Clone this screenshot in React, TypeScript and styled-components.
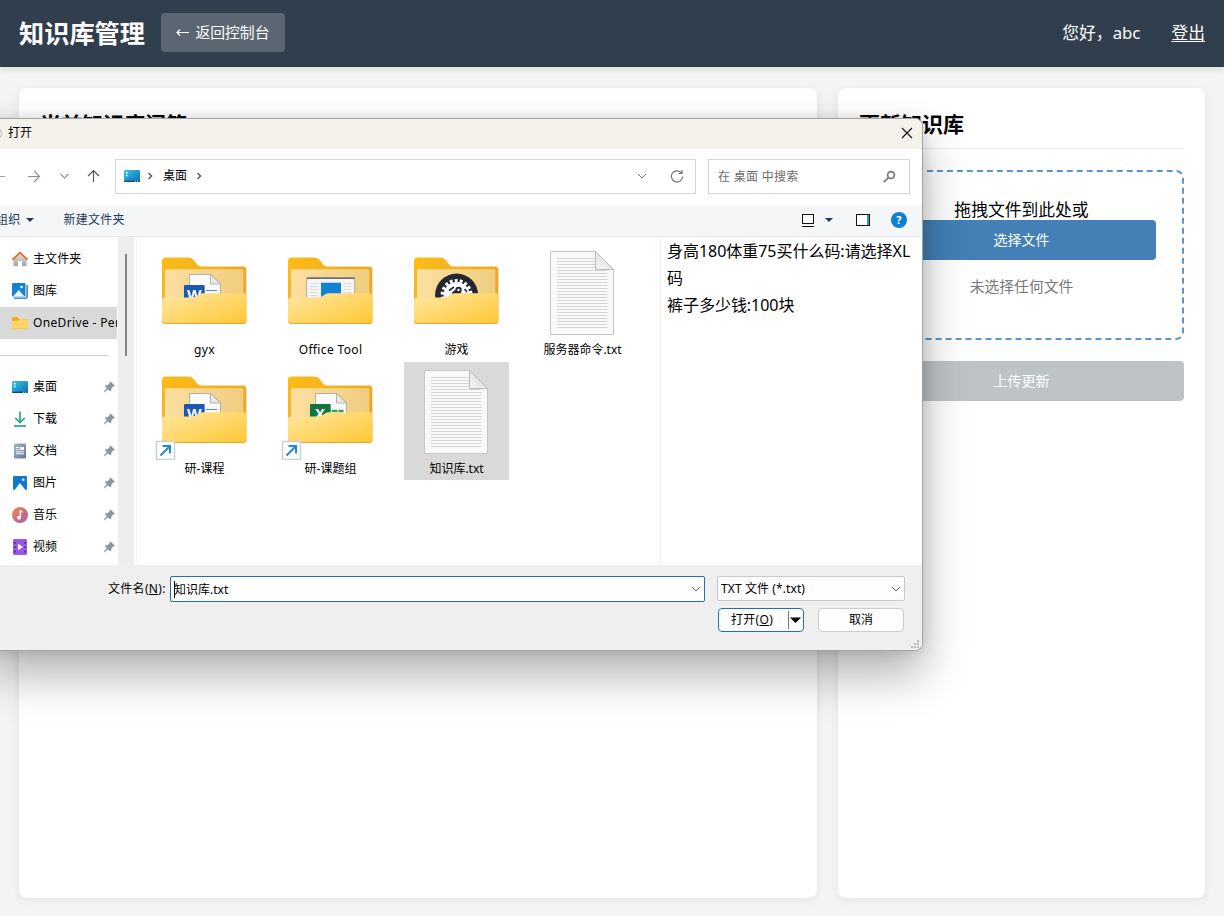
import React from "react";
import styled, { createGlobalStyle, css } from "styled-components";

const fontStack = `"Noto Sans", "Noto Sans CJK SC", sans-serif`;

const GlobalStyle = createGlobalStyle`
  * { box-sizing: border-box; }
  html, body { margin: 0; height: 100%; overflow: hidden; }
  body { background: #f4f4f4; font-family: ${fontStack}; color: #000; }
  h1, h2, p { margin: 0; }
  svg { display: block; flex: none; }
  button { font-family: inherit; }
`;

/* ---------- page ---------- */

const Page = styled.div`
  height: 916px;
  display: flex;
  flex-direction: column;
`;

const Header = styled.header`
  height: 67px;
  flex: none;
  padding: 0 19px 2px;
  display: flex;
  align-items: center;
  background: #313e4d;
  color: #fff;
  box-shadow: 0 2px 8px rgba(0, 0, 0, 0.12);
`;

const Title = styled.h1`
  font-size: 25.2px;
  line-height: 34px;
  white-space: nowrap;
`;

const BackButton = styled.button`
  margin: 0 0 0 16px;
  width: 124px;
  height: 39px;
  padding: 0 0 2px;
  border: 0;
  border-radius: 4px;
  background: #5a6671;
  color: #fff;
  font-size: 14.8px;
  display: flex;
  align-items: center;
  justify-content: center;
  gap: 6px;
  white-space: nowrap;
  svg { margin-top: 2px; }
`;

const UserArea = styled.div`
  margin-left: auto;
  display: flex;
  gap: 31px;
  font-size: 16.8px;
  line-height: 24px;
`;

const Logout = styled.a`
  text-decoration: underline;
  text-decoration-thickness: 1px;
  text-underline-offset: 2px;
`;

const Main = styled.main`
  flex: 1;
  display: grid;
  grid-template-columns: 798px 367px;
  gap: 21px;
  padding: 21px 19px 18px;
`;

const Card = styled.section`
  background: #fff;
  border-radius: 8px;
  padding: 21px;
  box-shadow: 0 2px 10px rgba(0, 0, 0, 0.07);
`;

const CardTitle = styled.h2`
  height: 40px;
  font-size: 21px;
  line-height: 30px;
  border-bottom: 1px solid #eee;
  margin-bottom: 21px;
`;

const DropZone = styled.div`
  height: 170px;
  border: 2px dashed #5b95cb;
  border-radius: 8px;
  padding: 26px;
  display: flex;
  flex-direction: column;
  text-align: center;
`;

const DropHint = styled.p`
  height: 22px;
  font-size: 16.8px;
  line-height: 24px;
`;

const WideButton = styled.button<{ $disabled?: boolean }>`
  width: 100%;
  height: 40px;
  flex: none;
  border: 0;
  padding: 0 0 2px;
  border-radius: 4px;
  font-size: 14px;
  color: #fff;
  background: ${(p) => (p.$disabled ? "#bdc3c7" : "#447fb6")};
  margin-top: ${(p) => (p.$disabled ? "21px" : "0")};
`;

const NoFile = styled.p`
  margin-top: 15px;
  font-size: 14.8px;
  line-height: 22px;
  color: #777;
`;

/* ---------- dialog ---------- */

const Dialog = styled.div`
  position: absolute;
  left: -11px;
  top: 118px;
  width: 934px;
  height: 533px;
  border: 1px solid #a3a3a3;
  border-left: 0;
  border-radius: 0 8px 8px 0;
  overflow: hidden;
  background: #fff;
  font-size: 12px;
  line-height: 18px;
  letter-spacing: 0.1px;
  display: flex;
  flex-direction: column;
  box-shadow: 0 24px 46px rgba(0, 0, 0, 0.31), 0 0 14px rgba(0, 0, 0, 0.12);
`;

const TitleBar = styled.div`
  height: 30px;
  flex: none;
  padding: 0 9px 2px 0;
  display: flex;
  align-items: center;
  background: #f5f2eb;
  svg:last-child { margin-left: auto; }
`;

const WindowName = styled.span`
  margin: -1px 0 0 6px;
`;

const NavBar = styled.div`
  height: 56px;
  flex: none;
  padding: 10px 12px 0 0;
  display: flex;
`;

const NavIcons = styled.div`
  width: 126px;
  height: 35px;
`;

const Field = styled.div<{ $w: number }>`
  width: ${(p) => p.$w}px;
  height: 35px;
  border: 1px solid #d6d6d6;
  display: flex;
  align-items: center;
`;

const AddressBox = styled(Field)`
  padding: 0 7px 1px 8px;
  margin-right: 12px;
`;

const Crumb = styled.span`
  margin: -1px 9px 0 10px;
`;

const RightIcons = styled.div`
  margin-left: auto;
  display: flex;
  align-items: center;
  gap: 17px;
`;

const SearchBox = styled(Field)`
  padding: 0 13px 0 9px;
  color: #6b6b6b;
  letter-spacing: 0.3px;
`;

const ToolBar = styled.div`
  height: 32px;
  flex: none;
  border-bottom: 1px solid #e6e8ea;
  background: #f4f6f8;
  color: #1e395b;
  padding: 0 15px 1px 7px;
  display: flex;
  align-items: center;
  white-space: nowrap;
`;

const Command = styled.span<{ $left?: number }>`
  margin-left: ${(p) => p.$left ?? 0}px;
  letter-spacing: 0.25px;
`;

const ToolIcons = styled.div`
  margin-left: auto;
  display: flex;
  align-items: center;
`;

const Body = styled.div`
  flex: 1;
  display: flex;
  min-height: 0;
`;

const SideBar = styled.div`
  width: 128px;
  margin-right: 1px;
  padding-top: 6px;
  overflow: hidden;
`;

const SideItem = styled.div<{ $active?: boolean }>`
  height: 32px;
  padding: 0 2px 0 23px;
  display: flex;
  align-items: center;
  white-space: nowrap;
  ${(p) =>
    p.$active &&
    css`
      background: #d9d9d9;
      letter-spacing: 0.35px;
    `}
`;

const SideLabel = styled.span`
  margin-left: 5px;
  flex: 1;
`;

const SideRule = styled.div`
  height: 32px;
  width: 120px;
  padding-top: 16px;
  &::after {
    content: "";
    display: block;
    height: 1px;
    background: #cfcfcf;
  }
`;

const ScrollTrack = styled.div`
  width: 16px;
  background: #eeeeee;
  padding: 17px 0 0 7px;
`;

const ScrollThumb = styled.div`
  width: 2px;
  height: 102px;
  background: #868686;
`;

const FilePane = styled.div`
  width: 524px;
  margin-left: 2px;
  border-left: 1px solid #f3f3f3;
  padding: 6px 0 0 15px;
  display: grid;
  grid-template-columns: repeat(4, 105px);
  grid-auto-rows: 118px;
  column-gap: 21px;
  row-gap: 1px;
`;

const Tile = styled.div<{ $selected?: boolean }>`
  background: ${(p) => (p.$selected ? "#d9d9d9" : "transparent")};
  border-radius: 1px;
  text-align: center;
  white-space: nowrap;
`;

const TileLabel = styled.div<{ $latin?: boolean }>`
  letter-spacing: ${(p) => (p.$latin ? "0.35px" : "0")};
`;

const Preview = styled.div`
  flex: 1;
  border-left: 1px solid #f0f0f0;
  padding: 1px 8px 0 6px;
  font-size: 16px;
  line-height: 27px;
  letter-spacing: -0.03px;
  white-space: nowrap;
`;

const Footer = styled.div`
  height: 85px;
  flex: none;
  background: #efefef;
  padding: 11px 17px 0 119px;
  display: flex;
`;

const NameLabel = styled.label`
  width: 62px;
  padding-top: 4px;
  letter-spacing: 0.3px;
  white-space: nowrap;
`;

const NameInput = styled.div`
  width: 535px;
  height: 26px;
  border: 1px solid #1f72b0;
  border-radius: 2px;
  background: #fff;
  padding: 0 3px;
  display: flex;
  align-items: center;
  justify-content: space-between;
`;

const FileName = styled.span`
  display: flex;
  margin-top: 2px;
  letter-spacing: 0;
`;

const Caret = styled.span`
  width: 1px;
  height: 17px;
  margin-right: -1px;
  background: #000;
`;

const FooterRight = styled.div`
  margin-left: 12px;
  width: 188px;
`;

const TypeSelect = styled.div`
  height: 25px;
  border: 1px solid #c9c9c9;
  border-radius: 2px;
  background: #fdfdfd;
  padding: 0 3px;
  display: flex;
  align-items: center;
  justify-content: space-between;
`;

const Buttons = styled.div`
  margin: 7px 1px 0 1px;
  display: flex;
  justify-content: space-between;
`;

const DialogButton = styled.div<{ $primary?: boolean }>`
  width: 86px;
  height: 24px;
  border: 1px solid ${(p) => (p.$primary ? "#1f72b0" : "#cccccc")};
  border-radius: 4px;
  background: #fdfdfd;
  display: flex;
  align-items: center;
  justify-content: ${(p) => (p.$primary ? "flex-start" : "center")};
  padding-left: ${(p) => (p.$primary ? "12px" : "0")};
  letter-spacing: ${(p) => (p.$primary ? "0.3px" : "0")};
`;

const ButtonText = styled.span<{ $w?: number }>`
  margin-top: -1px;
  width: ${(p) => (p.$w ? `${p.$w}px` : "auto")};
`;

const FieldText = styled.span`
  margin-top: 1px;
`;

const Grip = styled.div`
  position: absolute;
  right: 3px;
  bottom: 2px;
`;

const Gap = styled.span<{ $w: number }>`
  width: ${(p) => p.$w}px;
  flex: none;
`;

/* ---------- icons ---------- */

const DesktopIcon = () => (
  <svg width="16" height="16" viewBox="0 0 16 16">
    <defs>
      <linearGradient id="desk" x1="0" y1="0" x2="1" y2="1">
        <stop offset="0" stopColor="#35cbe0" />
        <stop offset="1" stopColor="#1168b8" />
      </linearGradient>
    </defs>
    <rect y="2" width="16" height="12" rx="1.2" fill="url(#desk)" />
    <path d="M0 12.800h16a1.200 1.200 0 0 1-1.200 1.200H1.200A1.200 1.200 0 0 1 0 12.800z" fill="#0c4a80" />
    <path d="M2 4.700h1.600M2 7.500h1.600" stroke="#fff" strokeWidth="1.500" />
    <path d="M11 13.300h1M13 13.300h1" stroke="#cfe9fa" strokeWidth="1" />
  </svg>
);

const HomeIcon = () => (
  <svg width="16" height="16" viewBox="0 0 16 16">
    <defs>
      <linearGradient id="wall" x1="0" y1="0" x2="0" y2="1">
        <stop offset="0" stopColor="#e6e6e6" />
        <stop offset="1" stopColor="#a3a3a3" />
      </linearGradient>
    </defs>
    <path d="M1.500 7.500 8 2l6.500 5.500V14a1.300 1.300 0 0 1-1.300 1.300H10V10H6v5.300H2.800A1.300 1.300 0 0 1 1.500 14z" fill="url(#wall)" />
    <path d="M1 8.300 8 1.600l7 6.700" fill="none" stroke="#d9742f" strokeWidth="1.900" strokeLinecap="round" strokeLinejoin="round" />
  </svg>
);

const GalleryIcon = () => (
  <svg width="16" height="16" viewBox="0 0 16 16">
    <path d="M15.100 2v11.800a1.300 1.300 0 0 1-1.300 1.300H2" fill="none" stroke="#2376b8" strokeWidth="1.400" />
    <rect width="13.500" height="13.500" rx="1" fill="#1583d5" />
    <path d="M1 13.500 6.800 7l5.800 6.500z" fill="#eaf6ff" />
    <circle cx="9.500" cy="4" r="1.300" fill="#fff" />
  </svg>
);

const OneDriveFolder = () => (
  <svg width="16" height="16" viewBox="0 0 16 16">
    <path d="M0 3a1 1 0 0 1 1-1h4.500l2 2H15a1 1 0 0 1 1 1v8a1 1 0 0 1-1 1H1a1 1 0 0 1-1-1z" fill="#f0ae13" />
    <path d="M0 6h5.500L7.500 4.300H15a1 1 0 0 1 1 1V13a1 1 0 0 1-1 1H1a1 1 0 0 1-1-1z" fill="#ffd666" />
    <path d="M.5 13.700h15" stroke="#e8b63e" strokeWidth=".6" />
  </svg>
);

const DownloadIcon = () => (
  <svg width="16" height="16" viewBox="0 0 16 16" fill="none" stroke="#2ba58c" strokeWidth="1.700">
    <path d="M8 .5v11M3.300 7 8 11.600 12.700 7" />
    <path d="M2 15h12" />
  </svg>
);

const DocIcon = () => (
  <svg width="16" height="16" viewBox="0 0 16 16">
    <defs>
      <linearGradient id="doc" x1="0" y1="0" x2="1" y2="1">
        <stop offset="0" stopColor="#a3b5cc" />
        <stop offset="1" stopColor="#60799a" />
      </linearGradient>
    </defs>
    <rect x="2" y=".5" width="12" height="15" rx="1.200" fill="url(#doc)" />
    <path d="M4 4.500h3M4 6.500h3M4 8.800h8M4 10.800h8" stroke="#fff" />
    <rect x="8" y="4" width="4" height="3" fill="#fff" />
  </svg>
);

const PictureIcon = () => (
  <svg width="16" height="16" viewBox="0 0 16 16">
    <rect x="1" y="1" width="14" height="14" rx="1" fill="#1279ca" />
    <path d="M2.500 15 8 8l5.500 7z" fill="#eff8ff" />
    <circle cx="11.300" cy="4.700" r="1.200" fill="#fff" />
  </svg>
);

const MusicIcon = () => (
  <svg width="16" height="16" viewBox="0 0 16 16">
    <defs>
      <linearGradient id="mus" x1="0" y1="0" x2="1" y2="1">
        <stop offset="0" stopColor="#ee8852" />
        <stop offset="1" stopColor="#ac5ba6" />
      </linearGradient>
    </defs>
    <circle cx="8" cy="8" r="8" fill="url(#mus)" />
    <path d="M8.200 10.500V3.800l2.600 1.500" fill="none" stroke="#fff" strokeWidth="1.300" />
    <circle cx="7" cy="10.700" r="1.900" fill="#fff" />
  </svg>
);

const VideoIcon = () => (
  <svg width="16" height="16" viewBox="0 0 16 16">
    <rect x="1" y="0" width="14" height="16" rx="1.200" fill="#9b5ae2" />
    <path d="M3 3v11M13 3v11" stroke="#43207e" strokeWidth="1.600" strokeDasharray="1.600 2.800" />
    <path d="M6 4.800v6.400l5-3.200z" fill="#fff" />
  </svg>
);

const PinIcon = () => (
  <svg width="11" height="12" viewBox="0 0 11 12" fill="#8a959e">
    <path d="M6.500.800 10.400 4.700 9.400 5.600 8.800 5.500 7.200 7.300 7 9.300 6.200 10 3.900 7.900 .6 11 .2 10.600 3.100 7 1.200 5.200 2 4.400 4 4.200 5.800 2.500 5.700 1.700z" stroke="#8a959e" strokeWidth=".6" />
  </svg>
);

const CrumbArrow = () => (
  <svg width="6" height="8" viewBox="0 0 6 8" fill="none" stroke="#5a5a5a" strokeWidth="1.500">
    <path d="M1.500 1 4.500 4 1.500 7" />
  </svg>
);

const Chevron = ({ color = "#777" }: { color?: string }) => (
  <svg width="10" height="8" viewBox="0 0 10 8" fill="none" stroke={color} strokeWidth="1">
    <path d="M1 2 5 6 9 2" />
  </svg>
);

const Triangle = () => (
  <svg width="8" height="4" viewBox="0 0 8 4">
    <path d="M0 0h8L4 4z" fill="#1e395b" />
  </svg>
);

type Content = "word" | "excel" | "window" | "gear";

const OfficeDoc = ({ kind }: { kind: "word" | "excel" }) => (
  <g>
    <path d="M37.500 31.500H58.500L68.500 41V60h-31z" fill="#fafafa" stroke="#a2a2a2" strokeWidth=".8" />
    <path d="M58.500 31.500V41h10z" fill="#e9e9e9" stroke="#a2a2a2" strokeWidth=".8" />
    {kind === "word" ? (
      <path d="M54 47.500h11" stroke="#4a90d0" strokeWidth="1" />
    ) : (
      <path d="M54 49h5.500M60.500 49h5" stroke="#27a267" strokeWidth="2.500" />
    )}
    <rect x="32" y="42" width="20.700" height="18" rx="1" fill={kind === "word" ? "#1b57b4" : "#12753f"} />
    <text x="42.200" y="57" fontSize="15" fontWeight="700" fill="#fff" textAnchor="middle">
      {kind === "word" ? "W" : "X"}
    </text>
  </g>
);

const Shape = { width: 105, height: 98, viewBox: "0 0 105 98" };

const FolderIcon = ({ content, shortcut }: { content: Content; shortcut?: boolean }) => (
  <svg {...Shape}>
    <defs>
      <linearGradient id="fback" x1="0" y1="0" x2="1" y2=".6">
        <stop offset="0" stopColor="#fdbc17" />
        <stop offset="1" stopColor="#e6a82c" />
      </linearGradient>
      <linearGradient id="finner" x1="0" y1="0" x2="1" y2="0">
        <stop offset="0" stopColor="#fce0a0" />
        <stop offset="1" stopColor="#efcd80" />
      </linearGradient>
      <linearGradient id="ffront" x1="0" y1="0" x2="1" y2="1">
        <stop offset="0" stopColor="#ffe7a2" />
        <stop offset="1" stopColor="#ffc833" />
      </linearGradient>
    </defs>
    <path d="M10 18a3.500 3.500 0 0 1 3.500-3.500H36c3 0 4.300 1 6 3l3.500 4.300c1 1.300 2 1.700 3.500 1.700h42.200a3.200 3.200 0 0 1 3.200 3.200V77.500a3.500 3.500 0 0 1-3.500 3.500H13.500A3.500 3.500 0 0 1 10 77.500z" fill="url(#fback)" />
    <rect x="13" y="26.300" width="78.300" height="45" rx="1.500" fill="url(#finner)" />
    {(content === "word" || content === "excel") && <OfficeDoc kind={content} />}
    {content === "window" && (
      <g>
        <rect x="28.700" y="34.500" width="48" height="30" rx="1.500" fill="#f5f5f5" stroke="#a69c8b" strokeWidth=".8" />
        <path d="M28.700 35.200h48" stroke="#6f6a64" strokeWidth="1.600" />
        <rect x="43" y="39.700" width="20" height="16" fill="#1283d2" />
        <path d="M32 40.500h8M32 43.500h8M32 46.500h8M32 49.500h8M32 52.500h8M65.500 40.500h8M65.500 43.500h8M65.500 46.500h8M65.500 49.500h8" stroke="#dcdcdc" strokeWidth="1" />
      </g>
    )}
    {content === "gear" && (
      <g>
        <circle cx="52.600" cy="52" r="21.500" fill="#252632" />
        <circle cx="52.600" cy="52" r="9" fill="none" stroke="#fff" strokeWidth="8" />
        <circle cx="52.600" cy="52" r="14" fill="none" stroke="#fff" strokeWidth="4" strokeDasharray="2.800 2.100" />
        <path d="M45 47.500l5-3.500M60.500 46l2.500 3" stroke="#252632" strokeWidth="1.600" />
        <circle cx="54.500" cy="47" r="3.200" fill="#252632" />
        <circle cx="54.500" cy="47" r="1.200" fill="#fff" />
      </g>
    )}
    <path d="M10 57.500a3 3 0 0 1 3-3H39c3 0 4.500-.7 6.500-2l1.500-1c1.300-.9 2.500-1.200 4.500-1.200H91.700a2.700 2.700 0 0 1 2.700 2.700V77.500a3.500 3.500 0 0 1-3.500 3.500H13.500A3.500 3.500 0 0 1 10 77.500z" fill="url(#ffront)" />
    <path d="M10.500 78.500c.6 1.300 1.700 1.900 3 1.900h77.400c1.400 0 2.500-.6 3-1.900" fill="none" stroke="#dfa52d" strokeWidth="1" />
    {shortcut && (
      <g>
        <rect x="4.500" y="79.500" width="18" height="18" rx=".5" fill="#fff" stroke="#c6d0de" strokeWidth="1.500" />
        <path d="M8.500 93.500 17.500 84.500M10.500 84h7.500v7.500" fill="none" stroke="#2389d2" strokeWidth="2" />
      </g>
    )}
  </svg>
);

const ruleRows = Array.from({ length: 24 }, (_, i) => 15.5 + i * 3);

const TextFileIcon = () => (
  <svg {...Shape}>
    <defs>
      <linearGradient id="fold" x1="0" y1="1" x2="1" y2="0">
        <stop offset="0" stopColor="#f6f6f6" />
        <stop offset="1" stopColor="#d5d5d5" />
      </linearGradient>
    </defs>
    <path d="M20.500 8.500H65.500L83.500 26.500V91.500h-63z" fill="#f8f9fa" stroke="#c4c6c8" />
    {ruleRows.map((y, i) => (
      <path key={y} d={`M27 ${y}H${i < 4 ? 65 : 77.5}`} stroke="#d3d5d7" strokeWidth="1" />
    ))}
    <path d="M65.500 8.500V26.500h18z" fill="url(#fold)" stroke="#b9bbbd" />
  </svg>
);

/* ---------- data ---------- */

const topPlaces = [
  { label: "主文件夹", icon: <HomeIcon /> },
  { label: "图库", icon: <GalleryIcon /> },
  { label: "OneDrive - Personal", icon: <OneDriveFolder />, active: true },
];

const pinned = [
  { label: "桌面", icon: <DesktopIcon /> },
  { label: "下载", icon: <DownloadIcon /> },
  { label: "文档", icon: <DocIcon /> },
  { label: "图片", icon: <PictureIcon /> },
  { label: "音乐", icon: <MusicIcon /> },
  { label: "视频", icon: <VideoIcon /> },
];

const files = [
  { label: "gyx", icon: <FolderIcon content="word" />, latin: true },
  { label: "Office Tool", icon: <FolderIcon content="window" />, latin: true },
  { label: "游戏", icon: <FolderIcon content="gear" /> },
  { label: "服务器命令.txt", icon: <TextFileIcon /> },
  { label: "研-课程", icon: <FolderIcon content="word" shortcut /> },
  { label: "研-课题组", icon: <FolderIcon content="excel" shortcut /> },
  { label: "知识库.txt", icon: <TextFileIcon />, selected: true },
];

const OpenDialog = () => (
  <Dialog>
    <TitleBar>
      <svg width="13" height="16" viewBox="0 0 13 16">
        <circle cx="6.500" cy="8.500" r="6" fill="#f2f2f2" stroke="#b5b5b5" />
      </svg>
      <WindowName>打开</WindowName>
      <svg width="12" height="12" viewBox="0 0 12 12" stroke="#111" strokeWidth="1.100">
        <path d="M1 1 11 11M11 1 1 11" />
      </svg>
    </TitleBar>

    <NavBar>
      <NavIcons>
        <svg width="126" height="35" viewBox="-11 0 126 35" fill="none" strokeWidth="1.200">
          <path d="M-8 17.500H5" stroke="#a0a0a0" />
          <path d="M28 17.500H39.500M34 12l5.500 5.500L34 23" stroke="#929292" />
          <path d="M60.500 15l4 4 4-4" stroke="#929292" />
          <path d="M93.500 23V11.500M88 17l5.500-5.500L99 17" stroke="#555" />
        </svg>
      </NavIcons>
      <AddressBox $w={581}>
        <DesktopIcon />
        <Gap $w={7} />
        <CrumbArrow />
        <Crumb>桌面</Crumb>
        <CrumbArrow />
        <RightIcons>
          <Chevron />
          <svg width="24" height="14" viewBox="0 0 24 14" fill="none" stroke="#777" strokeWidth="1.200">
            <path d="M17.600 4.200A5.600 5.600 0 1 0 18.600 7.500M18 1v3.500h-3.500" />
          </svg>
        </RightIcons>
      </AddressBox>
      <SearchBox $w={202}>
        <FieldText>在 桌面 中搜索</FieldText>
        <RightIcons>
          <svg width="13" height="13" viewBox="0 0 13 13" fill="none" stroke="#777" strokeWidth="1.700">
            <circle cx="8" cy="5" r="3.400" />
            <path d="M5.500 7.500.8 12.200" />
          </svg>
        </RightIcons>
      </SearchBox>
    </NavBar>

    <ToolBar>
      <Command>组织</Command>
      <Gap $w={5} />
      <Triangle />
      <Command $left={30}>新建文件夹</Command>
      <ToolIcons>
        <svg width="14" height="13" viewBox="0 0 14 13">
          <rect x="1.500" y=".5" width="11" height="9" fill="#fff" stroke="#111" />
          <path d="M1 12.500h12" stroke="#111" />
        </svg>
        <Gap $w={10} />
        <Triangle />
        <Gap $w={23} />
        <svg width="14" height="12" viewBox="0 0 14 12">
          <rect x=".5" y=".5" width="13" height="11" fill="#fff" />
          <rect x="11" y="1" width="2.500" height="10" fill="#3c9dc2" />
          <rect x=".5" y=".5" width="13" height="11" fill="none" stroke="#111" />
        </svg>
        <Gap $w={21} />
        <svg width="16" height="16" viewBox="0 0 16 16">
          <circle cx="8" cy="8" r="8" fill="#0f7fd0" />
          <text x="8" y="12" fontSize="11" fontWeight="700" fill="#fff" textAnchor="middle">?</text>
        </svg>
      </ToolIcons>
    </ToolBar>

    <Body>
      <SideBar>
        {topPlaces.map((p) => (
          <SideItem key={p.label} $active={p.active}>
            {p.icon}
            <SideLabel>{p.label}</SideLabel>
          </SideItem>
        ))}
        <SideRule />
        {pinned.map((p) => (
          <SideItem key={p.label}>
            {p.icon}
            <SideLabel>{p.label}</SideLabel>
            <PinIcon />
          </SideItem>
        ))}
      </SideBar>
      <ScrollTrack>
        <ScrollThumb />
      </ScrollTrack>
      <FilePane>
        {files.map((f) => (
          <Tile key={f.label} $selected={f.selected}>
            {f.icon}
            <TileLabel $latin={f.latin}>{f.label}</TileLabel>
          </Tile>
        ))}
      </FilePane>
      <Preview>
        <p>身高180体重75买什么码:请选择XL</p>
        <p>码</p>
        <p>裤子多少钱:100块</p>
      </Preview>
    </Body>

    <Footer>
      <NameLabel>
        文件名(<u>N</u>):
      </NameLabel>
      <NameInput>
        <FileName>
          <Caret />
          知识库.txt
        </FileName>
        <Chevron color="#666" />
      </NameInput>
      <FooterRight>
        <TypeSelect>
          <FieldText>TXT 文件 (*.txt)</FieldText>
          <Chevron color="#555" />
        </TypeSelect>
        <Buttons>
          <DialogButton $primary>
            <ButtonText $w={57}>
              打开(<u>O</u>)
            </ButtonText>
            <svg width="14" height="18" viewBox="0 0 14 18">
              <path d="M.5 0v18" stroke="#777" />
              <path d="M2 6.500h11L7.500 12z" fill="#000" />
            </svg>
          </DialogButton>
          <DialogButton>
            <ButtonText>取消</ButtonText>
          </DialogButton>
        </Buttons>
      </FooterRight>
    </Footer>
    <Grip>
      <svg width="8" height="8" viewBox="0 0 8 8" fill="#b9b9b9">
        <path d="M6 0h2v2H6zM3 3h2v2H3zM6 3h2v2H6zM0 6h2v2H0zM3 6h2v2H3zM6 6h2v2H6z" />
      </svg>
    </Grip>
  </Dialog>
);

export default function App() {
  return (
    <>
      <GlobalStyle />
      <Page>
        <Header>
          <Title>知识库管理</Title>
          <BackButton>
            <svg width="13" height="9" viewBox="0 0 13 9" fill="none" stroke="#fff" strokeWidth="1.200">
              <path d="M13 4.500H1M4 1.500l-3 3 3 3" />
            </svg>
            返回控制台
          </BackButton>
          <UserArea>
            <span>您好，abc</span>
            <Logout>登出</Logout>
          </UserArea>
        </Header>
        <Main>
          <Card>
            <CardTitle>当前知识库问答</CardTitle>
          </Card>
          <Card>
            <CardTitle>更新知识库</CardTitle>
            <DropZone>
              <DropHint>拖拽文件到此处或</DropHint>
              <WideButton>选择文件</WideButton>
              <NoFile>未选择任何文件</NoFile>
            </DropZone>
            <WideButton $disabled>上传更新</WideButton>
          </Card>
        </Main>
      </Page>
      <OpenDialog />
    </>
  );
}
